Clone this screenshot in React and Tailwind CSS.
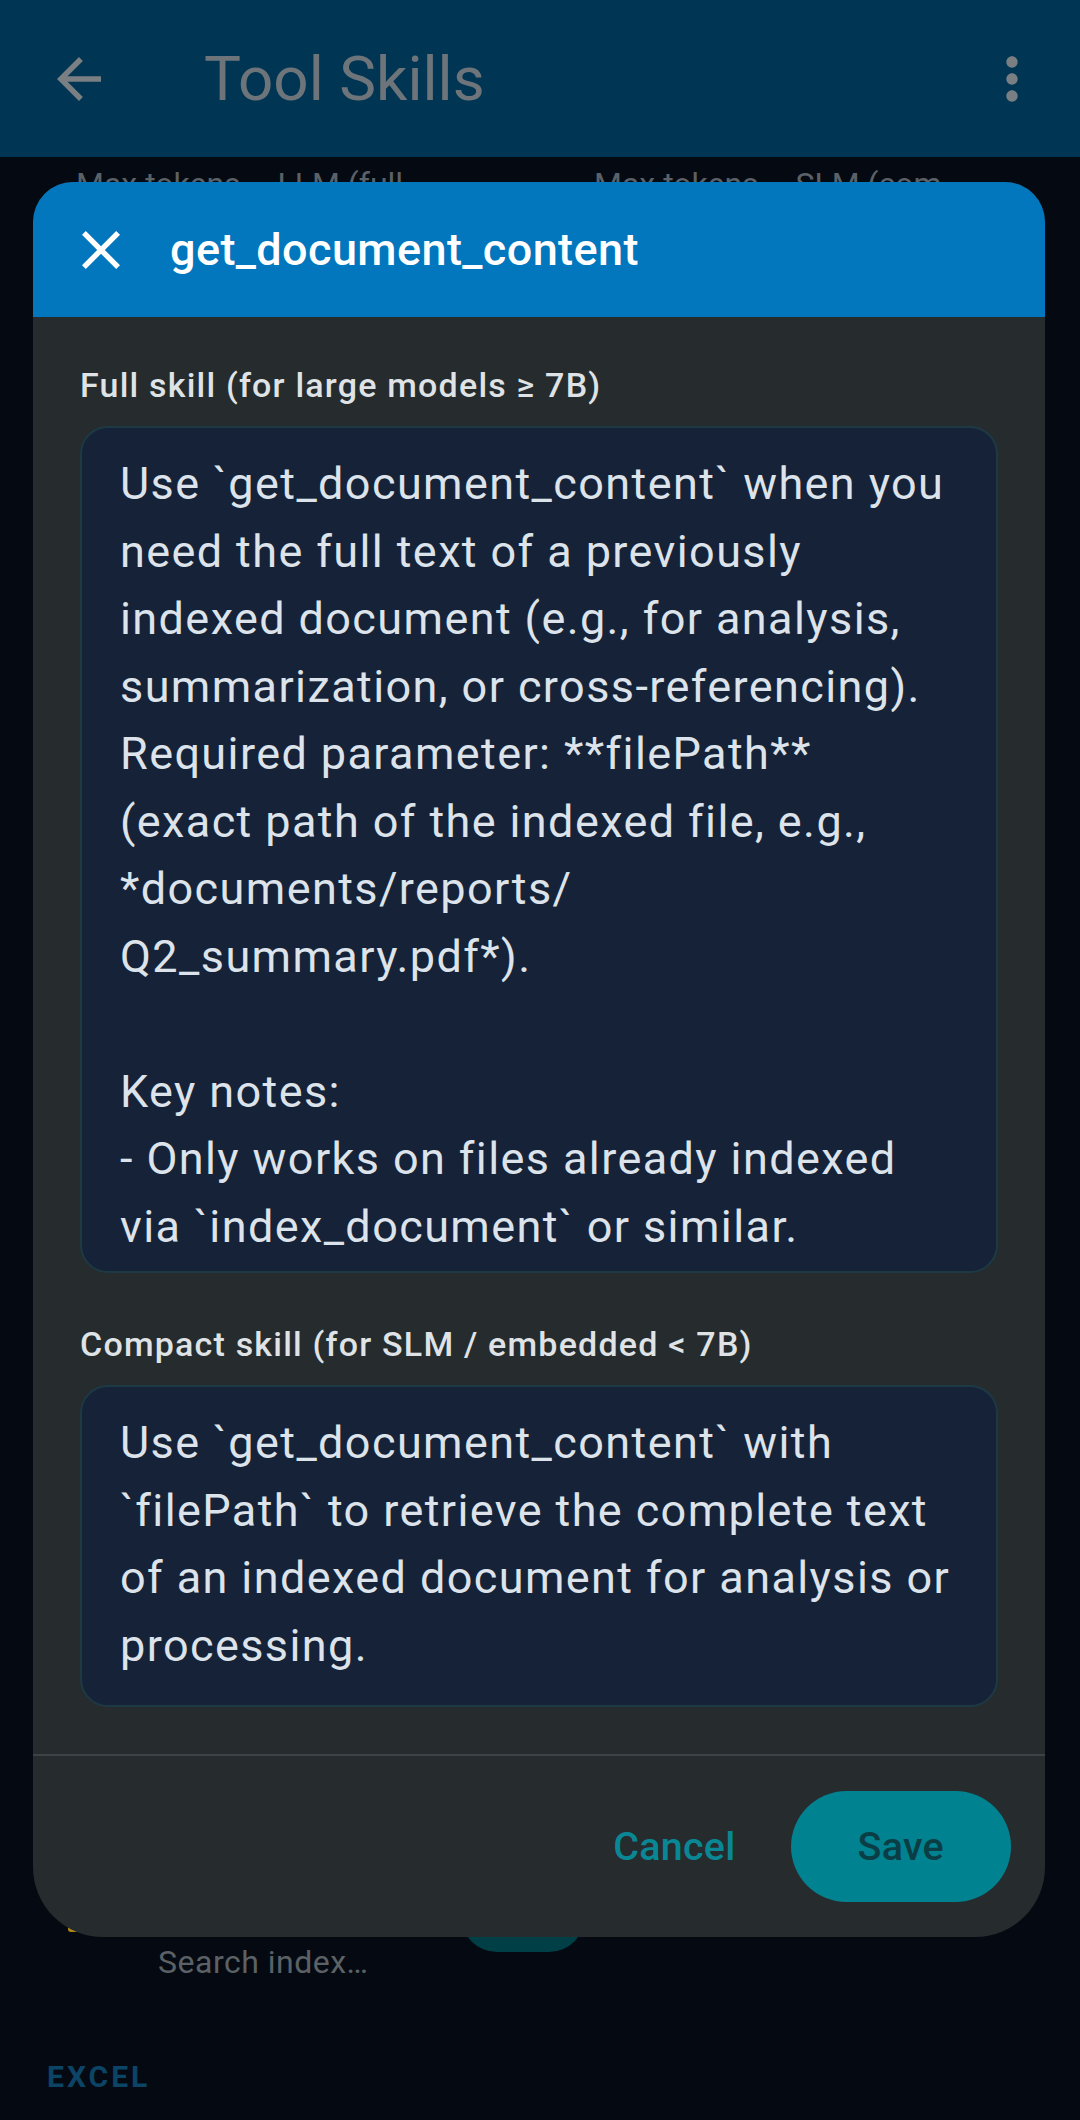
import React from 'react';

const fullSkill = [
  'Use `get_document_content` when you',
  'need the full text of a previously',
  'indexed document (e.g., for analysis,',
  'summarization, or cross-referencing).',
  'Required parameter: **filePath**',
  '(exact path of the indexed file, e.g.,',
  '*documents/reports/',
  'Q2_summary.pdf*).',
  '',
  'Key notes:',
  '- Only works on files already indexed',
  'via `index_document` or similar.',
];

const compactSkill = [
  'Use `get_document_content` with',
  '`filePath` to retrieve the complete text',
  'of an indexed document for analysis or',
  'processing.',
];

function SkillField({ label, lines, boxClass }) {
  return (
    <div className="flex flex-col">
      <label className="text-[34px] leading-[45px] font-medium tracking-[1.2px] text-[#dfe3e6]">{label}</label>
      <div
        className={`mt-[18px] rounded-[28px] border-2 border-[#1d3a44] bg-[#162238] pl-[38px] pr-[20px] pt-[22px] pb-[26px] overflow-hidden ${boxClass}`}
      >
        <div className="whitespace-pre text-[45px] leading-[67.5px] tracking-[1.4px] text-[#dde3ea]">
          {lines.join('\n')}
        </div>
      </div>
    </div>
  );
}

export default function App() {
  return (
    <div className="relative w-[1080px] h-[2120px] overflow-hidden bg-[#050a12] font-['Roboto',sans-serif]">
      {/* App bar (behind scrim) */}
      <header className="flex items-center h-[157px] bg-[#003553]">
        <svg className="ml-[57px] w-[44px] h-[44px]" viewBox="4 4 16 16" fill="#7a7f83">
          <path d="M20 11H7.83l5.59-5.59L12 4l-8 8 8 8 1.41-1.41L7.83 13H20v-2z" />
        </svg>
        <h1 className="ml-[103px] text-[62px] leading-none text-[#6e757a]">Tool Skills</h1>
        <svg className="ml-auto mr-[34px] w-[68px] h-[68px]" viewBox="0 0 24 24" fill="#7a7f83">
          <path d="M12 8c1.1 0 2-.9 2-2s-.9-2-2-2-2 .9-2 2 .9 2 2 2zm0 2c-1.1 0-2 .9-2 2s.9 2 2 2 2-.9 2-2-.9-2-2-2zm0 6c-1.1 0-2 .9-2 2s.9 2 2 2 2-.9 2-2-.9-2-2-2z" />
        </svg>
      </header>

      {/* Page content (behind scrim) */}
      <main className="flex flex-col">
        <div className="flex mt-[5px] text-[32px] leading-[45px] text-[#5b6167] whitespace-nowrap">
          <span className="ml-[76px] w-[518px]">Max tokens – LLM (full</span>
          <span>Max tokens – SLM (com</span>
        </div>

        <div className="flex items-end h-[72px] mt-[1673px]">
          <div className="ml-[68px] mb-[20px] w-[14px] h-[14px] rounded-[3px] bg-[#b08a17]" />
          <div className="ml-[379px] w-[124px] h-[72px] rounded-full bg-[#013f46] flex items-center justify-end pr-[14px]">
            <div className="w-[40px] h-[40px] rounded-full bg-[#022a30]" />
          </div>
        </div>
        <div className="mt-[-10px] pl-[158px] text-[32px] leading-[40px] tracking-[0.5px] text-[#5c6166]">Search index…</div>
        <div className="mt-[75px] pl-[47px] text-[30px] leading-[40px] font-bold tracking-[3px] text-[#0c4466]">EXCEL</div>
      </main>

      {/* Dialog */}
      <section className="absolute left-[33px] top-[182px] w-[1012px] h-[1755px] rounded-t-[40px] rounded-b-[70px] overflow-hidden bg-[#262b2e] flex flex-col">
        <div className="flex items-center h-[135px] bg-[#0277bd] shrink-0">
          <svg className="ml-[49px] w-[38px] h-[38px]" viewBox="5 5 14 14" fill="#ffffff">
            <path d="M19 6.41L17.59 5 12 10.59 6.41 5 5 6.41 10.59 12 5 17.59 6.41 19 12 13.41 17.59 19 19 17.59 13.41 12z" />
          </svg>
          <h2 className="ml-[50px] text-[45px] font-medium tracking-[0.4px] text-white">get_document_content</h2>
        </div>

        <div className="flex flex-col px-[47px] pt-[46px] pb-[47px] gap-[49px]">
          <SkillField label="Full skill (for large models ≥ 7B)" lines={fullSkill} boxClass="h-[847px]" />
          <SkillField label="Compact skill (for SLM / embedded < 7B)" lines={compactSkill} boxClass="" />
        </div>

        <div className="border-t-2 border-[#3b4346] flex items-center justify-end pr-[34px] pt-[35px]">
          <button className="h-[111px] px-[34px] text-[39.4px] font-medium tracking-[0.3px] text-[#0a8794]">Cancel</button>
          <button className="ml-[21px] h-[111px] px-[67px] rounded-full bg-[#008290] text-[39.4px] font-medium tracking-[0.3px] text-[#0a3d44]">
            Save
          </button>
        </div>
      </section>
    </div>
  );
}
